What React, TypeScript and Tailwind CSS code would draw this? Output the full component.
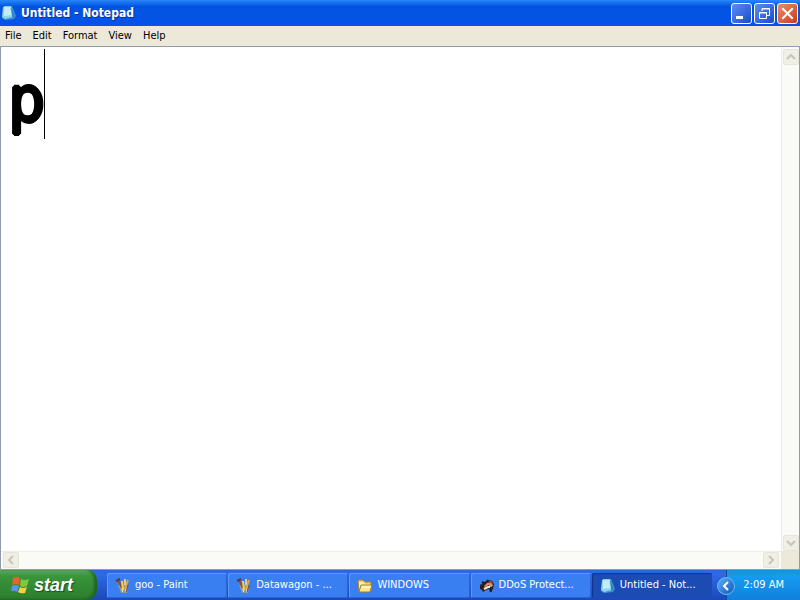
import React from "react";

function NoteIcon() {
  return (
    <svg viewBox="0 0 16 16" className="h-4 w-4 shrink-0" aria-hidden="true">
      <path d="M3 1h8l4 10-2 3-9 1-3-2z" fill="#3f97cf" />
      <path d="M2 2h8l2 10-8 2-3-2z" fill="#8fd4e8" />
      <path d="M3 3h6l2 7-8 1z" fill="#c2edf5" />
      <path d="M10 2l4 9-2 3-1-3z" fill="#2f83cc" />
      <path d="M3 2h7" stroke="#e9ffff" strokeWidth="1" />
    </svg>
  );
}

function PaintIcon() {
  return (
    <svg viewBox="0 0 16 16" className="h-4 w-4 shrink-0" aria-hidden="true">
      <path d="M3 7h10l-1 8H6z" fill="#8d9698" />
      <path d="M6 8h2v6H7zM10 8h2l-1 6h-1z" fill="#e4e4d8" />
      <path d="M3 2l4 8" stroke="#a14335" strokeWidth="2" />
      <path d="M1 3l4-2" stroke="#5d3b35" strokeWidth="2" />
      <path d="M7 3l1 9" stroke="#f2d74b" strokeWidth="2" />
      <path d="M13 2l-3 9" stroke="#e8a630" strokeWidth="2" />
      <path d="M10 1v6" stroke="#d9cbb0" strokeWidth="2" />
      <path d="M13 7l-2 7" stroke="#65523b" strokeWidth="1" />
    </svg>
  );
}

function FolderIcon() {
  return (
    <svg viewBox="0 0 16 16" className="h-4 w-4 shrink-0" aria-hidden="true">
      <path d="M1 3l1-1h4l2 2h6v9H2z" fill="#f3cf63" stroke="#a78235" strokeWidth="1" />
      <path d="M2 4h4l2 2h5v4H2z" fill="#fff0a5" />
      <path d="M4 7h11l-2 7H2z" fill="#ffe583" stroke="#9c7a30" strokeWidth="1" />
      <path d="M5 8h9l-1 2H4z" fill="#fff6bd" />
    </svg>
  );
}

function SpiderIcon() {
  return (
    <svg viewBox="0 0 16 16" className="h-4 w-4 shrink-0" aria-hidden="true">
      <path d="M1 7l3-2 3-2 3-1 3 1 2 3-1 5-2 3-2-3-3 1-3 2-1-2-2-1z" fill="#33211f" />
      <path d="M3 4l4 2M8 2l2 3M2 10l3-2M12 14l-1-4" stroke="#1c1a22" strokeWidth="2" />
      <path d="M5 8l3-3 5 0 1 3-4-1-4 2z" fill="#d98a6c" />
      <path d="M8 4l4-1 2 3-3-1z" fill="#bd4c35" />
      <path d="M5 11l4-2 2 0" fill="none" stroke="#f6e6da" strokeWidth="2" />
      <path d="M10 8h3" stroke="#fff" strokeWidth="1" />
    </svg>
  );
}

function Flag() {
  return (
    <svg viewBox="0 0 20 20" className="h-5 w-5 shrink-0" aria-hidden="true">
      <path d="M3 3q4-2 7 0L9 10q-3-2-7 0z" fill="#f0602c" />
      <path d="M11 4q3 2 8 0l-2 7q-4 2-7 0z" fill="#7fc93c" />
      <path d="M2 11q4-2 7 0l-2 6q-3-2-6-1z" fill="#5b95f2" />
      <path d="M10 12q3 2 7 0l-2 6q-4 1-7-1z" fill="#f9cf3a" />
    </svg>
  );
}

type Dir = "up" | "down" | "left" | "right";
const chevrons: Record<Dir, string> = {
  up: "M4 10l4-4 4 4",
  down: "M4 6l4 4 4-4",
  left: "M10 4L6 8l4 4",
  right: "M6 4l4 4-4 4",
};

function ScrollButton({ dir }: { dir: Dir }) {
  return (
    <button
      aria-label={"Scroll " + dir}
      className="flex h-4 w-4 shrink-0 items-center justify-center rounded-xs border border-[#e6e5da] bg-[#f0efe6]"
    >
      <svg viewBox="0 0 16 16" className="h-4 w-4 shrink-0">
        <path d={chevrons[dir]} fill="none" stroke="#c6c5b8" strokeWidth="2" />
      </svg>
    </button>
  );
}

const captionButton =
  "flex h-[21px] w-[21px] items-center justify-center rounded-[3px] border border-white";

const menus = ["File", "Edit", "Format", "View", "Help"];

const tasks = [
  { label: "goo - Paint", icon: <PaintIcon />, active: false },
  { label: "Datawagon - ...", icon: <PaintIcon />, active: false },
  { label: "WINDOWS", icon: <FolderIcon />, active: false },
  { label: "DDoS Protect...", icon: <SpiderIcon />, active: false },
  { label: "Untitled - Not...", icon: <NoteIcon />, active: true },
];

function TitleBar() {
  return (
    <header className="flex h-[26px] shrink-0 items-center bg-linear-to-b from-[#2a86fa] via-[#0353e1] via-25% to-[#0553ea] pr-0.5 pl-px">
      <NoteIcon />
      <h1 className="ml-1 flex-1 font-['DejaVu_Sans_Condensed','DejaVu_Sans',sans-serif] text-[12px] font-bold text-white [text-shadow:1px_1px_#0a2e9a]">
        Untitled - Notepad
      </h1>
      <div className="flex gap-0.5">
        <button aria-label="Minimize" className={captionButton + " bg-linear-to-br from-[#5f8cf3] to-[#1c49cb]"}>
          <svg viewBox="0 0 19 19" className="h-[19px] w-[19px]">
            <path d="M4 12h7v3H4z" fill="#fff" />
          </svg>
        </button>
        <button aria-label="Restore" className={captionButton + " bg-linear-to-br from-[#5f8cf3] to-[#1c49cb]"}>
          <svg viewBox="0 0 19 19" className="h-[19px] w-[19px]" fill="none" stroke="#fff">
            <path d="M7 7V4.500h7.500v7H12M7 5h8" />
            <path d="M4.500 8.500h7v6h-7zM4 9h8" />
          </svg>
        </button>
        <button aria-label="Close" className={captionButton + " bg-linear-to-br from-[#ee8a6b] to-[#c93a14]"}>
          <svg viewBox="0 0 19 19" className="h-[19px] w-[19px]">
            <path d="M5 5l9 9M14 5l-9 9" stroke="#fff" strokeWidth="2" strokeLinecap="square" />
          </svg>
        </button>
      </div>
    </header>
  );
}

function Editor() {
  return (
    <main className="flex min-h-0 flex-1 flex-col border border-[#8e9bb0] bg-white">
      <div className="flex min-h-0 flex-1">
        <div className="relative min-w-0 flex-1">
          <textarea
            aria-label="Document text"
            defaultValue="p"
            spellCheck={false}
            className="block h-full w-full resize-none overflow-hidden bg-white pt-2 pl-2 font-['DejaVu_Sans_Condensed','DejaVu_Sans',sans-serif] text-[62px] leading-[90px] text-black outline-none [text-shadow:2px_0_#000,-2px_0_#000,0_2px_#000,0_-2px_#000,1px_1px_#000,-1px_1px_#000,1px_-1px_#000,-1px_-1px_#000]"
          />
          <span className="absolute top-0.5 left-[43px] h-[90px] w-px bg-black" />
        </div>
        <div className="flex w-[18px] flex-col items-center justify-between border-l border-[#eeede5] bg-[#fafaf6] pt-0.5">
          <ScrollButton dir="up" />
          <ScrollButton dir="down" />
        </div>
      </div>
      <div className="flex h-[18px] shrink-0">
        <div className="flex flex-1 items-start justify-between border-t border-[#eeede5] bg-[#fafaf6] pr-0.5 pl-0.5">
          <ScrollButton dir="left" />
          <ScrollButton dir="right" />
        </div>
        <div className="w-[18px] bg-[#ece9d8]" />
      </div>
    </main>
  );
}

function Taskbar() {
  return (
    <footer className="flex h-[30px] shrink-0 bg-linear-to-b from-[#2b68d6] via-[#2d6ae6] via-15% to-[#1c47b8]">
      <button className="flex w-[97px] shrink-0 items-center gap-1 rounded-r-[10px] bg-linear-to-b from-[#5aa95a] via-[#3a953b] via-20% to-[#2c7d2d] pl-2.5 font-['Liberation_Sans',sans-serif] text-[18px] font-bold text-white italic shadow-[inset_-3px_-1px_3px_#1f6426] [text-shadow:1px_1px_1px_#1f4a20]">
        <Flag />
        start
      </button>
      <nav aria-label="Open windows" className="ml-2.5 flex min-w-0 flex-1 gap-px pt-[3px] pb-0.5">
        {tasks.map((task) => (
          <button
            key={task.label}
            className={
              "flex min-w-0 flex-1 items-center gap-1 rounded-xs pl-2 text-[11px] text-white " +
              (task.active
                ? "bg-[#1c4bb4] shadow-[inset_1px_1px_1px_#12348a]"
                : "bg-[#397ff2] shadow-[inset_1px_1px_#5b98f8,inset_-1px_-1px_#2a63d6]")
            }
          >
            {task.icon}
            <span className="truncate">{task.label}</span>
          </button>
        ))}
      </nav>
      <div className="relative ml-3.5 flex w-[74px] shrink-0 items-center justify-end border-l border-[#0c4a9c] bg-linear-to-b from-[#1a8fe0] via-[#169bf0] via-20% to-[#1180dc] pr-4">
        <button
          aria-label="Show hidden icons"
          className="absolute top-[7px] -left-[10px] flex h-[18px] w-[18px] items-center justify-center rounded-full border border-[#6fb8f2] bg-linear-to-br from-[#5aaef6] to-[#0e58c0]"
        >
          <svg viewBox="0 0 16 16" className="h-4 w-4 shrink-0">
            <path d="M10 4L6 8l4 4" fill="none" stroke="#fff" strokeWidth="2" />
          </svg>
        </button>
        <time className="text-[11px] whitespace-nowrap text-white">2:09 AM</time>
      </div>
    </footer>
  );
}

export default function App() {
  return (
    <div className="flex h-screen flex-col bg-[#ece9d8] font-['DejaVu_Sans_Condensed','DejaVu_Sans',sans-serif] text-[11px]">
      <TitleBar />
      <nav aria-label="Menu" className="flex h-5 shrink-0 items-center bg-[#ece9d8] text-black">
        {menus.map((menu) => (
          <button key={menu} className="pr-1.5 pl-[5px] leading-5">
            {menu}
          </button>
        ))}
      </nav>
      <Editor />
      <Taskbar />
    </div>
  );
}
